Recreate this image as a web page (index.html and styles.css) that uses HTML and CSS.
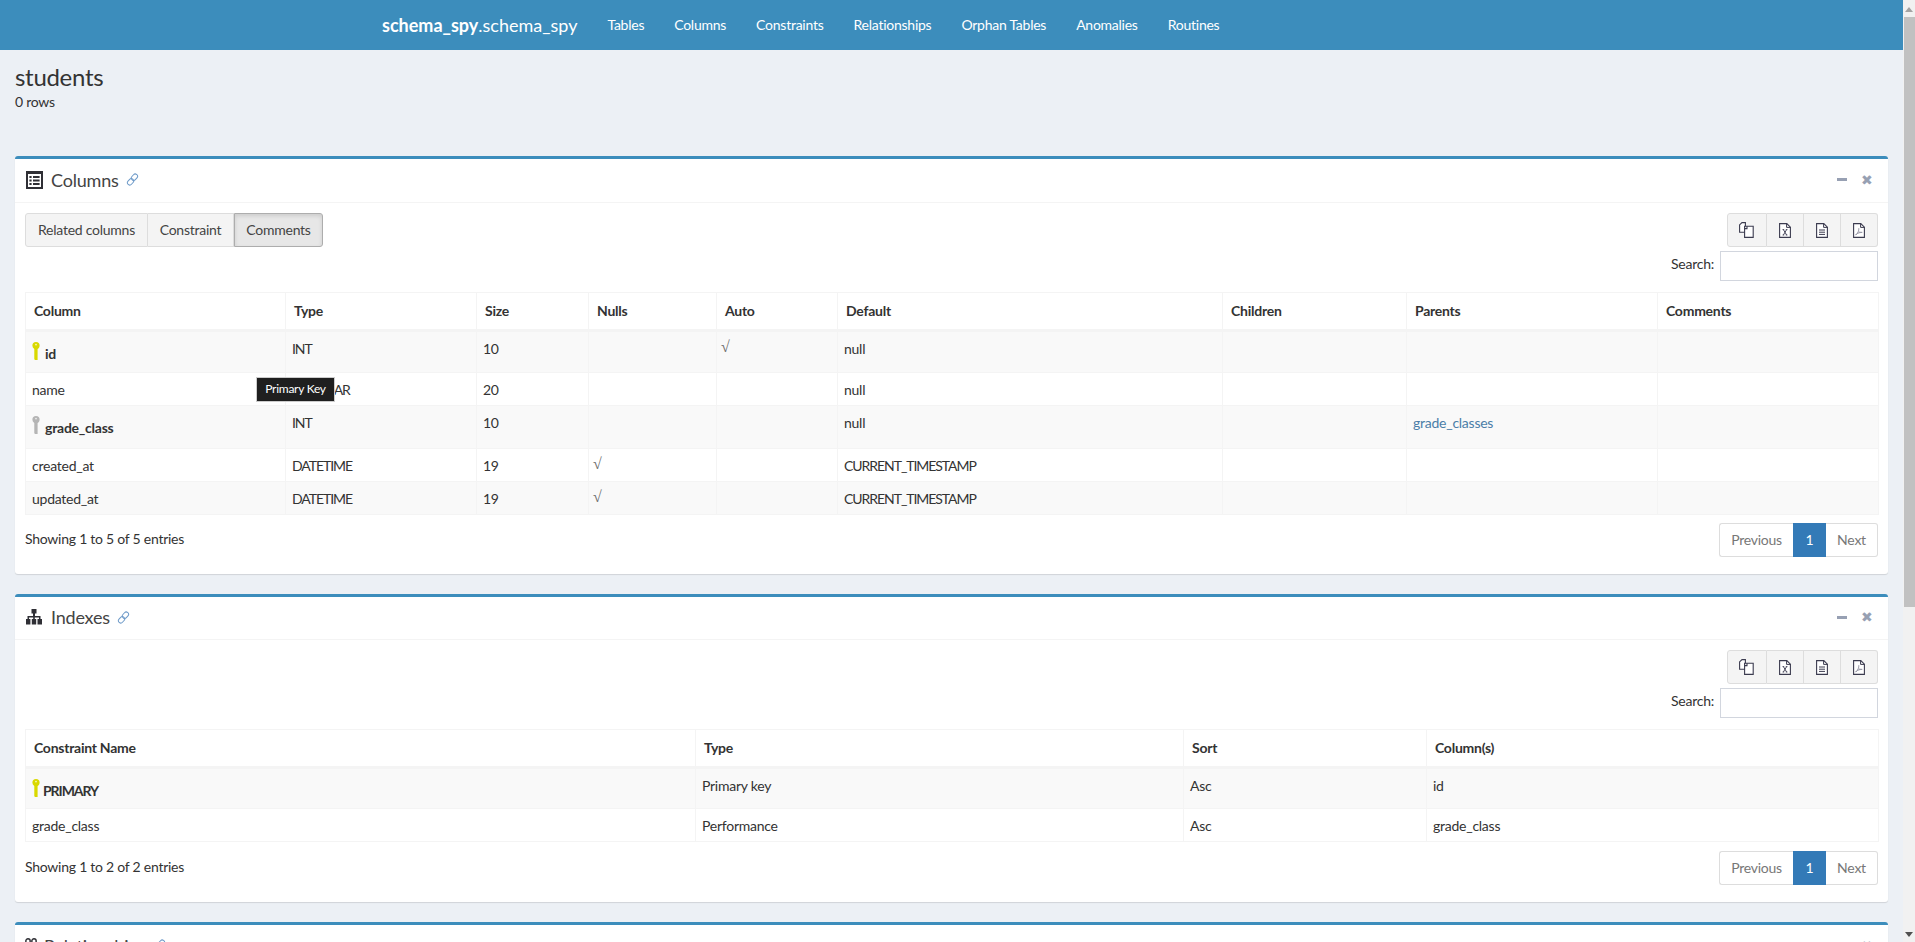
FILE: index.html
```html
<!DOCTYPE html>
<html lang="en">
<head>
<meta charset="utf-8">
<title>students</title>
<link rel="stylesheet" href="styles.css">
</head>
<body>
<svg class="defs" width="0" height="0" aria-hidden="true">
  <defs>
    <symbol id="i-key" viewBox="0 0 8 18"><path d="M4 0a3.6 3.6 0 0 1 3.6 3.7c0 1.5-.9 2.8-2 3.3V18H2.9l-.6-1V7A3.6 3.6 0 0 1 .4 3.7 3.6 3.6 0 0 1 4 0z" fill="currentColor"/><circle cx="4" cy="2.6" r=".9" fill="#fff" opacity=".75"/></symbol>
    <symbol id="i-link" viewBox="0 0 14 14"><g fill="none" stroke="#6f9bc9" stroke-width="1.1"><rect x="6.6" y=".8" width="5" height="7.4" rx="2.4" transform="rotate(42 9.1 4.5)"/><rect x="2.4" y="5.8" width="5" height="7.4" rx="2.4" transform="rotate(42 4.9 9.5)"/></g></symbol>
    <symbol id="i-copy" viewBox="0 0 15 16"><g fill="#fff" stroke="#3b3b4f" stroke-width="1.1"><path d="M.6 2.8 3 .6h3.4v9.6H.6z"/><path d="M5.6 4.2 8 4.2h6.2v11.2H5.6V6.6z"/><path d="M8 4.2v2.4H5.6" fill="none"/></g></symbol>
    <symbol id="i-xls" viewBox="0 0 12 15"><path d="M.6.6h7.2l3.6 3.6v10.2H.6z" fill="#fff" stroke="#3b3b4f" stroke-width="1.1"/><path d="M7.6.6v3.8h3.8" fill="none" stroke="#3b3b4f"/><path d="M3.6 6.6h1.6M6.8 6.6h1.6M4.4 6.6l3.2 5.4M7.6 6.6 4.4 12M3.6 12h1.6M6.8 12h1.6" fill="none" stroke="#4c4c60"/></symbol>
    <symbol id="i-txt" viewBox="0 0 12 15"><path d="M.6.6h7.2l3.6 3.6v10.2H.6z" fill="#fff" stroke="#3b3b4f" stroke-width="1.1"/><path d="M7.6.6v3.8h3.8M3 7h6M3 9.2h6M3 11.4h6" fill="none" stroke="#3b3b4f"/></symbol>
    <symbol id="i-pdf" viewBox="0 0 12 15"><path d="M.6.6h7.2l3.6 3.6v10.2H.6z" fill="#fff" stroke="#3b3b4f" stroke-width="1.1"/><path d="M7.6.6v3.8h3.8" fill="none" stroke="#3b3b4f"/><path d="M5.8 5.2c.4 2.4-1 5-3.2 7M5.6 9c1.4.2 2.6.4 3.6.4M2.6 12c1-1.4 3.2-2.6 6.6-2.6" fill="none" stroke="#9a9aa8"/></symbol>
    <symbol id="i-list" viewBox="0 0 17 18"><path d="M0 0h17v18H0zM2 3v13h13V3z" fill="#2f2f35" fill-rule="evenodd"/><path d="M3.4 5h2.2v2H3.4zM7 5h6.6v2H7zM3.4 8.500h2.200v2H3.400zM7 8.500h6.600v2H7zM3.400 12h2.200v2H3.400zM7 12h6.600v2H7z" fill="#2f2f35"/></symbol>
    <symbol id="i-tree" viewBox="0 0 18 16"><path d="M6.500 0h5v4.500H10V7h5.500v3H17v5.500h-4.500V10H14V8.500H9.800V10h1.400v5.500H6.800V10h1.400V8.500H4V10h1.400v5.500H1V10h1.500V7H8V4.500H6.500z" fill="#2f2f35"/></symbol>
  </defs>
</svg>

<div class="frame">
  <div class="page">
    <header class="topbar">
      <a class="brand"><b>schema_spy</b>.schema_spy</a>
      <nav class="nav">
        <a>Tables</a><a>Columns</a><a>Constraints</a><a>Relationships</a><a>Orphan Tables</a><a>Anomalies</a><a>Routines</a>
      </nav>
    </header>

    <section class="title-block">
      <h1>students</h1>
      <p>0 rows</p>
    </section>

    <section class="panel">
      <div class="panel-head">
        <svg class="head-icon list"><use href="#i-list"/></svg>
        <h3>Columns</h3>
        <svg class="anchor"><use href="#i-link"/></svg>
        <div class="tools"><span class="min"></span><span class="close">✖</span></div>
      </div>
      <div class="panel-body">
        <div class="toolbar">
          <div class="btn-group">
            <span class="btn w-related">Related columns</span><span class="btn w-constraint">Constraint</span><span class="btn w-comments active">Comments</span>
          </div>
          <div class="btn-group">
            <span class="btn ico"><svg class="i-copy"><use href="#i-copy"/></svg></span><span class="btn ico"><svg class="i-doc"><use href="#i-xls"/></svg></span><span class="btn ico"><svg class="i-doc"><use href="#i-txt"/></svg></span><span class="btn ico"><svg class="i-doc"><use href="#i-pdf"/></svg></span>
          </div>
        </div>
        <div class="search"><label>Search:</label><span class="search-input"></span></div>
        <table class="grid cols">
          <colgroup><col class="c1"><col class="c2"><col class="c3"><col class="c4"><col class="c5"><col class="c6"><col class="c7"><col class="c8"><col class="c9"></colgroup>
          <thead><tr><th>Column</th><th>Type</th><th>Size</th><th>Nulls</th><th>Auto</th><th>Default</th><th>Children</th><th>Parents</th><th>Comments</th></tr></thead>
          <tbody>
            <tr class="tall"><td class="first"><span class="keyed"><svg class="key pk"><use href="#i-key"/></svg><b>id</b></span></td><td class="caps">INT</td><td>10</td><td></td><td class="tick">√</td><td>null</td><td></td><td></td><td></td></tr>
            <tr class="even"><td class="first">name</td><td class="caps">VARCHAR</td><td>20</td><td></td><td></td><td>null</td><td></td><td></td><td></td></tr>
            <tr class="tall2"><td class="first"><span class="keyed"><svg class="key fk"><use href="#i-key"/></svg><b>grade_class</b></span></td><td class="caps">INT</td><td>10</td><td></td><td></td><td>null</td><td></td><td><a class="link">grade_classes</a></td><td></td></tr>
            <tr class="even low"><td class="first">created_at</td><td class="caps">DATETIME</td><td>19</td><td class="tick">√</td><td></td><td class="caps">CURRENT_TIMESTAMP</td><td></td><td></td><td></td></tr>
            <tr class="end"><td class="first">updated_at</td><td class="caps">DATETIME</td><td>19</td><td class="tick">√</td><td></td><td class="caps">CURRENT_TIMESTAMP</td><td></td><td></td><td></td></tr>
          </tbody>
        </table>
        <div class="foot">
          <span class="info">Showing 1 to 5 of 5 entries</span>
          <div class="pager"><span class="pg prev">Previous</span><span class="pg on">1</span><span class="pg next">Next</span></div>
        </div>
      </div>
    </section>

    <section class="panel">
      <div class="panel-head short">
        <svg class="head-icon tree"><use href="#i-tree"/></svg>
        <h3>Indexes</h3>
        <svg class="anchor"><use href="#i-link"/></svg>
        <div class="tools"><span class="min"></span><span class="close">✖</span></div>
      </div>
      <div class="panel-body">
        <div class="toolbar end-only">
          <div class="btn-group">
            <span class="btn ico"><svg class="i-copy"><use href="#i-copy"/></svg></span><span class="btn ico"><svg class="i-doc"><use href="#i-xls"/></svg></span><span class="btn ico"><svg class="i-doc"><use href="#i-txt"/></svg></span><span class="btn ico"><svg class="i-doc"><use href="#i-pdf"/></svg></span>
          </div>
        </div>
        <div class="search"><label>Search:</label><span class="search-input"></span></div>
        <table class="grid idx">
          <colgroup><col class="d1"><col class="d2"><col class="d3"><col class="d4"></colgroup>
          <thead><tr><th>Constraint Name</th><th>Type</th><th>Sort</th><th>Column(s)</th></tr></thead>
          <tbody>
            <tr class="tall3"><td class="first"><span class="keyed tight"><svg class="key pk"><use href="#i-key"/></svg><b class="caps">PRIMARY</b></span></td><td>Primary key</td><td>Asc</td><td>id</td></tr>
            <tr class="plain"><td class="first">grade_class</td><td>Performance</td><td>Asc</td><td>grade_class</td></tr>
          </tbody>
        </table>
        <div class="foot foot2">
          <span class="info">Showing 1 to 2 of 2 entries</span>
          <div class="pager"><span class="pg prev">Previous</span><span class="pg on">1</span><span class="pg next">Next</span></div>
        </div>
      </div>
    </section>

    <section class="panel">
      <div class="panel-head">
        <svg class="head-icon rel" viewBox="0 0 12 16"><circle cx="3" cy="3" r="2.200" fill="none" stroke="#2f2f35" stroke-width="1.400"/><circle cx="9" cy="3" r="2.200" fill="none" stroke="#2f2f35" stroke-width="1.400"/></svg>
        <h3>Relationships</h3>
        <svg class="anchor"><use href="#i-link"/></svg>
        <div class="tools"><span class="min"></span><span class="close">✖</span></div>
      </div>
    </section>
  </div>

  <aside class="scrollbar">
    <span class="arrow up"></span>
    <span class="thumb"></span>
    <span class="arrow down"></span>
  </aside>

  <div class="tooltip">Primary Key</div>
</div>
</body>
</html>
```

FILE: styles.css
```css
* { box-sizing: border-box; }
html, body { margin: 0; height: 100%; overflow: hidden; }
body {
  background: #ecf0f5;
  color: #333;
  font: 14px/20px Lato, "Open Sans", sans-serif;
  letter-spacing: -0.25px;
}
.defs { position: absolute; }
.frame { position: relative; display: flex; height: 942px; overflow: hidden; }
.page { flex: 1 1 auto; min-width: 0; height: 942px; overflow: hidden; }

/* top bar */
.topbar {
  display: flex;
  align-items: center;
  height: 50px;
  padding-left: 367px;
  background: #3c8dbc;
  color: #fff;
}
.brand { padding: 0 15px; font-size: 18px; letter-spacing: 0; white-space: nowrap; }
.brand b { font-weight: 700; }
.nav { display: flex; }
.nav a { padding: 0 15px; white-space: nowrap; }

/* title */
.title-block { height: 106px; padding: 13px 15px 0; }
.title-block h1 { margin: 0; font-size: 24px; line-height: 28px; font-weight: 400; letter-spacing: -0.3px; }
.title-block p { margin: 1px 0 0; line-height: 20px; }

/* panels */
.panel {
  margin: 0 15px 20px;
  background: #fff;
  border-top: 3px solid #3c8dbc;
  border-radius: 3px;
  box-shadow: 0 1px 1px rgba(0,0,0,.12);
}
.panel-head {
  display: flex;
  align-items: center;
  height: 44px;
  padding: 0 10px 2px;
  border-bottom: 1px solid #f4f4f4;
}
.panel-head.short { height: 43px; }
.panel-head h3 { margin: 0; font-size: 18px; line-height: 20px; font-weight: 400; color: #444; letter-spacing: -0.2px; }
.head-icon { flex: none; margin-right: 8px; }
.head-icon.list { width: 17px; height: 18px; margin-left: 1px; }
.head-icon.tree { width: 18px; height: 16px; }
.head-icon.rel { width: 12px; height: 16px; margin-right: 7px; }
.anchor { flex: none; width: 13px; height: 13px; margin-left: 7px; }
.tools { display: flex; align-items: center; margin-left: auto; margin-right: 5px; color: #97a0b3; }
.min { width: 10px; height: 3px; background: #97a0b3; margin-right: 14px; }
.close { font-size: 14px; line-height: 12px; letter-spacing: 0; }

.panel-body { padding: 10px; }
.toolbar { display: flex; justify-content: space-between; }
.toolbar.end-only { justify-content: flex-end; }
.btn-group { display: flex; height: 34px; }
.btn {
  display: flex;
  align-items: center;
  justify-content: center;
  height: 34px;
  background: #f4f4f4;
  border: 1px solid #ddd;
  border-left-width: 0;
  color: #444;
  white-space: nowrap;
}
.btn:first-child { border-left-width: 1px; border-radius: 3px 0 0 3px; }
.btn:last-child { border-radius: 0 3px 3px 0; }
.w-related { width: 123px; }
.w-constraint { width: 86px; }
.w-comments { width: 89px; }
.btn.active { background: #e7e7e7; border: 1px solid #adadad; box-shadow: inset 0 2px 4px rgba(0,0,0,.12); }
.btn.ico { width: 37px; }
.btn.ico:first-child { width: 40px; }
.i-copy { width: 15px; height: 16px; margin-right: 2px; }
.i-doc { width: 12px; height: 15px; }

.search { display: flex; justify-content: flex-end; align-items: flex-start; margin: 4px 0 11px; height: 30px; }
.search label { margin: 3px 6px 0 0; }
.search-input { width: 158px; height: 30px; background: #fff; border: 1px solid #d2d6de; }

/* tables */
.grid { width: 100%; table-layout: fixed; border-collapse: collapse; border: 1px solid #f4f4f4; }
.grid th, .grid td { border: 1px solid #f4f4f4; vertical-align: top; text-align: left; }
.grid th { height: 38px; padding: 8px; border-bottom-width: 3px; font-weight: 700; color: #333; vertical-align: middle; }
.grid td { padding: 7px 6px 5px; overflow: hidden; white-space: nowrap; }
.grid tbody tr { background: #f9f9f9; }
.grid tbody tr.plain { background: #fff; }
.c1 { width: 260px; } .c2 { width: 191px; } .c3 { width: 112px; } .c4 { width: 128px; }
.c5 { width: 121px; } .c6 { width: 385px; } .c7 { width: 184px; } .c8 { width: 251px; } .c9 { width: 221px; }
.d1 { width: 670px; } .d2 { width: 488px; } .d3 { width: 243px; } .d4 { width: 452px; }
.tall td { height: 42px; }
.tall2 td { height: 43px; }
.tall3 td { height: 41px; }
.even td { height: 33px; background: #fff; }
.low td { height: 32px; }
.end td { height: 33px; }
.plain td { height: 33px; }
.keyed { display: flex; align-items: flex-end; height: 24px; }
.keyed b { font-weight: 700; line-height: 18px; }
.key { flex: none; width: 8px; height: 18px; margin: 1px 5px 3px 0; }
.keyed.tight .key { margin-right: 3px; }
.caps { letter-spacing: -1.05px; }
.pk { color: #d9d900; }
.fk { color: #b5b5b5; }
.link { color: #4b7ea8; }
.grid td.tick { padding: 5px 5px 0 4px; font-family: "Liberation Serif", serif; font-size: 16px; color: #6b6b6b; }

/* footer */
.foot { display: flex; justify-content: space-between; align-items: center; height: 34px; margin: 8px 0 7px; }
.foot2 { margin-top: 9px; }
.info { margin-bottom: 2px; }
.pager { display: flex; height: 34px; }
.pg { display: flex; align-items: center; justify-content: center; height: 34px; border: 1px solid #ddd; background: #fff; color: #777; }
.prev { width: 74px; border-right-width: 0; border-radius: 3px 0 0 3px; }
.on { width: 33px; background: #337ab7; border-color: #337ab7; color: #fff; }
.next { width: 52px; border-left-width: 0; border-radius: 0 3px 3px 0; }

/* window scrollbar */
.scrollbar {
  flex: none;
  display: flex;
  flex-direction: column;
  align-items: flex-end;
  width: 12px;
  height: 942px;
  background: #f1f1f1;
}
.thumb { display: block; width: 11px; height: 590px; background: #c1c1c1; }
.arrow { display: block; width: 11px; height: 17px; flex: none; position: relative; }
.arrow::after { content: ""; position: absolute; left: 1px; border: 4.500px solid transparent; }
.up::after { top: 3px; border-bottom: 5px solid #a3a3a3; }
.down { margin-top: auto; }
.down::after { top: 7px; border-top: 5px solid #505050; }

/* tooltip */
.tooltip {
  position: absolute;
  left: 256px;
  top: 377px;
  width: 79px;
  height: 25px;
  background: #1f1f1f;
  border: 1px solid #ccc;
  color: #fff;
  font-size: 12px;
  line-height: 22px;
  text-align: center;
}
```
